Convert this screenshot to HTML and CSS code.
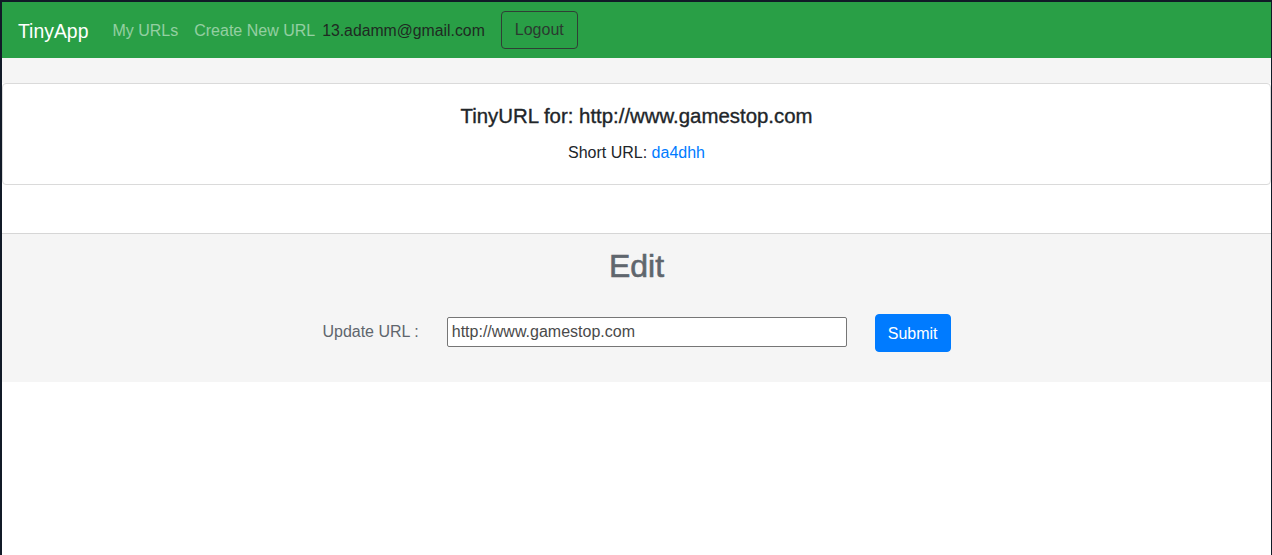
FILE: index.html
```html
<!DOCTYPE html>
<html>
<head>
<meta charset="utf-8">
<title>TinyApp</title>
<link rel="stylesheet" href="styles.css">
</head>
<body>
<div class="frame">
  <nav class="navbar">
    <a class="brand" href="#">TinyApp</a>
    <a class="nav-link" href="#">My URLs</a>
    <a class="nav-link nav-link-last" href="#">Create New URL</a>
    <span class="user">13.adamm@gmail.com</span>
    <button class="btn-logout" type="button">Logout</button>
  </nav>
  <div class="topband"></div>
  <div class="card">
    <h5 class="card-title">TinyURL for: http://www.gamestop.com</h5>
    <p class="card-text">Short URL: <a class="short" href="#">da4dhh</a></p>
  </div>
  <div class="spacer"></div>
  <section class="edit">
    <h2 class="edit-title">Edit</h2>
    <form class="edit-form">
      <label class="edit-label">Update URL :</label>
      <input class="edit-input" type="text" value="http://www.gamestop.com">
      <button class="btn-submit" type="button">Submit</button>
    </form>
  </section>
</div>
</body>
</html>
```

FILE: styles.css
```css
html {
  background: #111a27;
  height: 100%;
}
body {
  margin: 0;
  height: 100%;
  font-family: "Liberation Sans", Arial, sans-serif;
  font-size: 16px;
  color: #212529;
}
.frame {
  margin: 2px 1px 0 2px;
  background: #fff;
  min-height: calc(100% - 2px);
}
.navbar {
  display: flex;
  align-items: center;
  height: 56px;
  box-sizing: border-box;
  padding: 9px 16px 7px;
  background: #299f46;
}
.brand {
  font-size: 19.4px;
  line-height: 30px;
  padding: 5px 0;
  margin-right: 16px;
  color: #fff;
  text-decoration: none;
}
.nav-link {
  padding: 8px;
  line-height: 24px;
  color: rgba(255, 255, 255, 0.5);
  text-decoration: none;
}
.nav-link-last {
  padding-right: 7px;
}
.user {
  color: #1f2a22;
  line-height: 24px;
  font-size: 15.8px;
}
.btn-logout {
  margin-left: 16px;
  margin-top: -2px;
  font-family: inherit;
  font-size: 16px;
  line-height: 24px;
  padding: 6px 13px;
  background: transparent;
  color: #2b3a30;
  border: 1px solid #2f3f35;
  border-radius: 4px;
}
.topband {
  height: 25px;
  background: #f5f5f5;
}
.card {
  border: 1px solid #dadada;
  border-radius: 4px;
  padding: 20px 20px 19px;
  text-align: center;
  background: #fff;
}
.card-title {
  margin: 0 0 13px;
  font-size: 20.4px;
  font-weight: 500;
  line-height: 24px;
  color: #212529;
  -webkit-text-stroke: 0.35px #212529;
}
.card-text {
  margin: 0;
  line-height: 24px;
}
.short {
  color: #007bff;
  text-decoration: none;
}
.spacer {
  height: 48px;
}
.edit {
  border-top: 1px solid #d6d6d6;
  background: #f5f5f5;
  padding: 13px 0 30px;
  text-align: center;
}
.edit-title {
  margin: 0 0 29px;
  font-size: 32px;
  font-weight: 500;
  line-height: 38px;
  color: #5f666d;
  -webkit-text-stroke: 0.6px #5f666d;
}
.edit-form {
  display: flex;
  align-items: center;
  justify-content: center;
  gap: 28px;
  margin: 0;
}
.edit-label {
  color: #5f666d;
  line-height: 24px;
  margin-top: -2px;
}
.edit-input {
  width: 400px;
  height: 30px;
  margin-top: -3px;
  box-sizing: border-box;
  padding: 0 4px;
  font-family: inherit;
  font-size: 16px;
  color: #4a4a4a;
  border: 1px solid #767676;
  border-radius: 2px;
  background: #fff;
}
.btn-submit {
  font-family: inherit;
  font-size: 16px;
  line-height: 24px;
  padding: 7px 12px 5px;
  background: #007bff;
  color: #fff;
  border: 1px solid #007bff;
  border-radius: 4px;
}
```
